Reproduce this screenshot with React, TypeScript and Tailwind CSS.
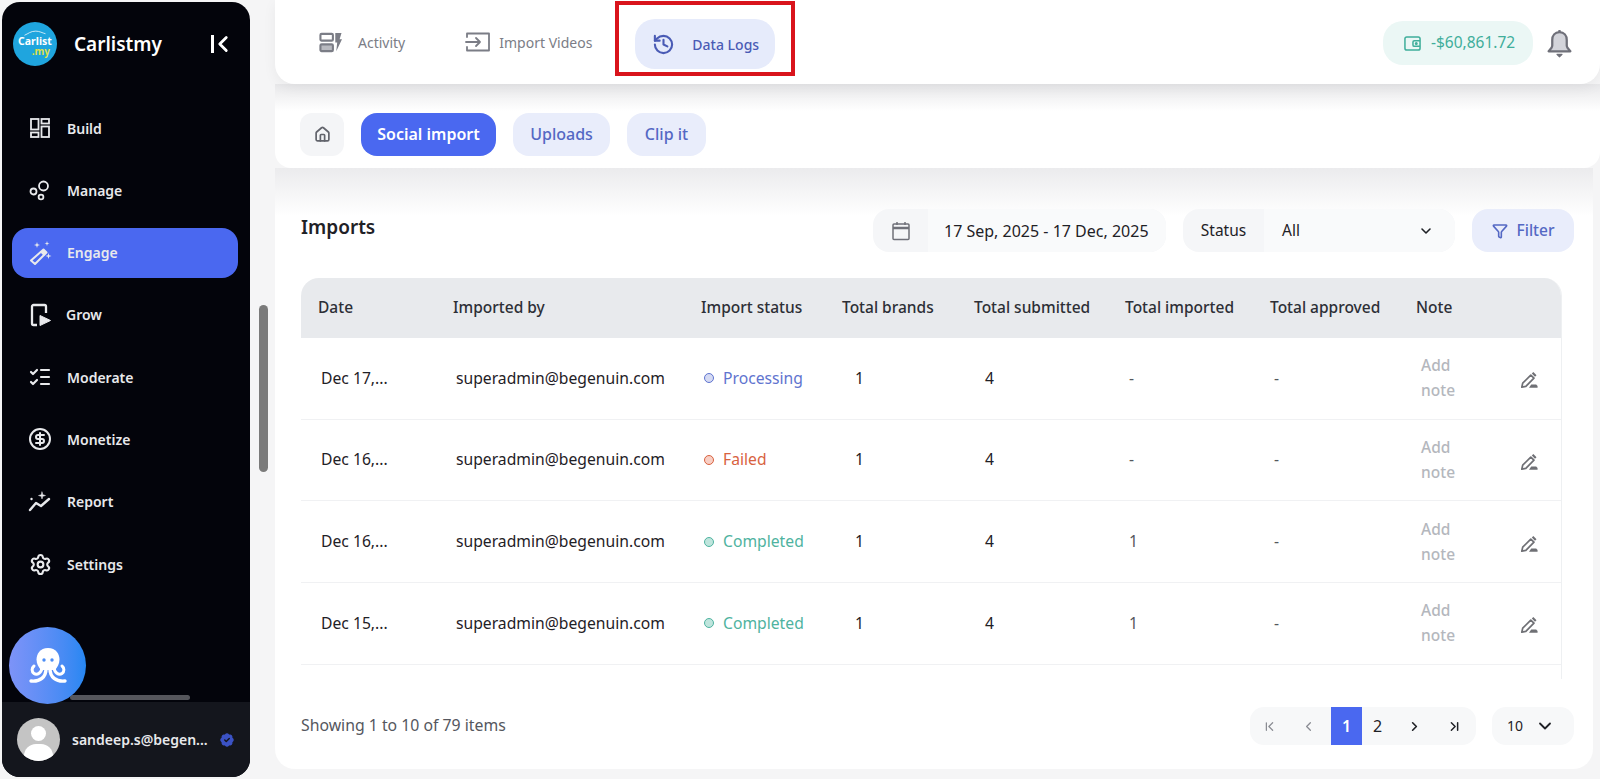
import {
  BadgeCheck,
  ChevronDown,
  ChevronFirst,
  ChevronLast,
  ChevronLeft,
  ChevronRight,
  CircleDollarSign,
  Funnel,
  History,
  House,
  ListChecks,
  Settings,
} from "lucide-react";
import type { ReactNode } from "react";

const rowGrid = "grid grid-cols-[135px_248px_141px_132px_151px_145px_146px_108px_54px]";

function BuildIcon() {
  return (
    <svg viewBox="0 0 20 20" className="h-[20px] w-[20px]" fill="none" stroke="currentColor" strokeWidth="1.800">
      <rect x="1" y="1" width="7.500" height="10.500" />
      <rect x="1" y="14.500" width="7.500" height="4.500" />
      <rect x="11.500" y="1" width="7.500" height="4.500" />
      <rect x="11.500" y="8.500" width="7.500" height="10.500" />
    </svg>
  );
}

function ManageIcon() {
  return (
    <svg viewBox="0 0 24 24" className="h-[24px] w-[24px]" fill="none" stroke="currentColor" strokeWidth="1.800">
      <circle cx="5.500" cy="13.500" r="3" />
      <circle cx="15.500" cy="8" r="4.500" />
      <circle cx="13" cy="19" r="2.400" />
    </svg>
  );
}

function WandIcon() {
  return (
    <svg viewBox="0 0 24 24" className="h-[24px] w-[24px]" fill="currentColor">
      <path d="M15.500 8.500l3 3L7 23l-4-3.500z" fill="none" stroke="currentColor" strokeWidth="2" strokeLinejoin="round" />
      <path d="M12.500 11.500l3.500 3.500 2.500-3.500-3-3z" />
      <path d="M9 1l.7 2.300L12 4l-2.300.7L9 7l-.7-2.300L6 4l2.300-.7z" />
      <path d="M19 0l.6 1.900 1.900.6-1.900.6L19 5l-.6-1.900-1.900-.6 1.900-.6z" />
      <path d="M20.500 12l.7 2.300 2.300.7-2.300.7-.7 2.300-.7-2.300-2.300-.7 2.300-.7z" />
    </svg>
  );
}

function GrowIcon() {
  return (
    <svg viewBox="0 0 24 24" className="h-[26px] w-[26px]" fill="none" stroke="currentColor" strokeWidth="2.300">
      <path d="M9 22H5.500A1.500 1.500 0 0 1 4 20.500v-17A1.500 1.500 0 0 1 5.500 2h11A1.500 1.500 0 0 1 18 3.500V10" />
      <path d="M12 12.500v10l10.500-5z" fill="currentColor" strokeWidth="1" strokeLinejoin="round" />
    </svg>
  );
}

function ReportIcon() {
  return (
    <svg viewBox="0 0 24 24" className="h-[24px] w-[24px]" fill="none" stroke="currentColor" strokeWidth="2.400" strokeLinecap="round" strokeLinejoin="round">
      <path d="M2 20l6-7 5 3 8-7" />
      <path d="M14 2l.8 2.700L17.500 5.500l-2.700.8L14 9l-.8-2.700-2.700-.8 2.700-.8z" fill="currentColor" strokeWidth="0.500" />
      <path d="M3.500 9h.01" />
    </svg>
  );
}

function OctopusIcon() {
  return (
    <svg viewBox="0 0 40 38" className="h-[38px] w-[40px]" fill="none">
      <path d="M20 1C12 1 8.500 7 8.500 12.500C8.500 17 10.500 20 13 23L27 23C29.500 20 31.500 17 31.500 12.500C31.500 7 28 1 20 1Z" fill="white" />
      <circle cx="16" cy="13" r="1.700" fill="#4b8df5" />
      <circle cx="24" cy="13" r="1.700" fill="#4b8df5" />
      <path d="M14 20C14 26 9 28.500 6 26.500C3.500 24.800 3.500 21 6 19" stroke="white" strokeWidth="3" strokeLinecap="round" />
      <path d="M26 20C26 26 31 28.500 34 26.500C36.500 24.800 36.500 21 34 19" stroke="white" strokeWidth="3" strokeLinecap="round" />
      <path d="M18 22C18 30 12 35 3 34" stroke="white" strokeWidth="3.400" strokeLinecap="round" />
      <path d="M22 22C22 30 28 35 37 34" stroke="white" strokeWidth="3.400" strokeLinecap="round" />
    </svg>
  );
}

function ActivityIcon() {
  return (
    <svg viewBox="0 0 24 24" className="h-[23px] w-[23px] text-[#7b7d86]" fill="none" stroke="currentColor" strokeWidth="2.200">
      <rect x="1.500" y="3" width="13" height="7" rx="1.200" />
      <rect x="1.500" y="14" width="13" height="7" rx="1.200" fill="#b9bac0" />
      <path d="M17 2h6.500l-2 6.500h2.500l-6 12.500 1-9h-2z" fill="currentColor" stroke="none" />
    </svg>
  );
}

function ImportIcon() {
  return (
    <svg viewBox="0 0 26 24" className="h-[24px] w-[26px] text-[#7b7d86]" fill="none" stroke="currentColor" strokeWidth="1.800" strokeLinecap="round" strokeLinejoin="round">
      <path d="M2 7V3.500h22v17H2V17" />
      <path d="M1 12h14M11 8l4 4-4 4" />
    </svg>
  );
}

function WalletIcon() {
  return (
    <svg viewBox="0 0 18 18" className="h-[17px] w-[17px] text-[#3fae9b]" fill="none" stroke="currentColor" strokeWidth="1.600">
      <rect x="1" y="2" width="16" height="14" rx="2" />
      <path d="M17 6h-6a1.500 1.500 0 0 0-1.500 1.500v3A1.500 1.500 0 0 0 11 12h6" />
      <circle cx="13" cy="9" r="0.800" fill="currentColor" />
    </svg>
  );
}

function BellIcon() {
  return (
    <svg viewBox="0 0 24 28" className="h-[29px] w-[25px]" fill="#d3d4da" stroke="#6f7079" strokeWidth="2.200" strokeLinejoin="round">
      <path d="M12 3c-4.500 0-7 3.500-7 7.500V16c0 1.500-1 3-3.500 5.500h21C20 19 19 17.500 19 16v-5.500C19 6.500 16.500 3 12 3z" />
      <path d="M12 1v2" />
      <path d="M9.500 24.500h5L12 27z" fill="#6f7079" strokeWidth="1" />
    </svg>
  );
}

function CalendarIcon() {
  return (
    <svg viewBox="0 0 18 20" className="h-[20px] w-[18px] text-[#6f7079]" fill="none" stroke="currentColor" strokeWidth="1.500">
      <rect x="1" y="3" width="16" height="15.500" rx="1" />
      <path d="M1 7h16" strokeWidth="2.500" />
      <path d="M5 1v3M13 1v3" />
    </svg>
  );
}

function EditIcon() {
  return (
    <svg viewBox="0 0 20 20" className="h-[18px] w-[18px] text-[#6f7075]" fill="none" stroke="currentColor" strokeWidth="1.900" strokeLinejoin="round">
      <path d="M2 18l1-4.500L12 4.500l3.500 3.500L6.500 17z" />
      <path d="M14 2l3.500 3.500" strokeWidth="2.400" />
      <path d="M10 18.500h9.500v-1.800L18 15h-5.500z" fill="currentColor" stroke="none" />
    </svg>
  );
}

function NavItem({ icon, label, active, tight }: { icon: ReactNode; label: string; active?: boolean; tight?: boolean }) {
  return (
    <div className={`flex h-[50px] items-center rounded-[16px] pl-[16px] text-[14px] font-semibold text-[#e8e9ec] ${active ? "bg-[#4a68f0]" : ""}`}>
      <span className="flex w-[24px] justify-center text-[#e8e9ec]">{icon}</span>
      <span className={tight ? "ml-[14px]" : "ml-[15px]"}>{label}</span>
    </div>
  );
}

function Sidebar() {
  return (
    <aside className="relative ml-[2px] mt-[2px] flex h-[775px] w-[248px] shrink-0 flex-col overflow-hidden rounded-[18px] bg-[#03040b]">
      <div className="flex h-[84px] items-center pl-[11px] pr-[14px]">
        <div className="relative flex h-[44px] w-[44px] flex-col items-center justify-center rounded-full bg-[#1fa5de] pt-[4px] leading-[10px]">
          <svg viewBox="0 0 30 8" className="absolute left-[7px] top-[8px] h-[6px] w-[30px]" fill="none" stroke="white" strokeWidth="1">
            <path d="M1 7C6 5 9 1.500 16 1.500C21 1.500 25 4 29 5" />
          </svg>
          <span className="text-[10.500px] font-bold text-white">Carlist</span>
          <span className="self-end pr-[7px] text-[10px] font-bold text-[#dfe04a]">.my</span>
        </div>
        <span className="ml-[17px] text-[19px] font-semibold text-white">Carlistmy</span>
        <span className="ml-auto flex items-center">
          <span className="h-[18px] w-[3px] bg-white" />
          <ChevronLeft size={26} strokeWidth={2.600} className="-ml-[4px] text-white" />
        </span>
      </div>
      <nav className="ml-[10px] mr-[12px] mt-[17px] flex flex-col gap-[12.300px]">
        <NavItem icon={<BuildIcon />} label="Build" />
        <NavItem icon={<ManageIcon />} label="Manage" />
        <NavItem icon={<WandIcon />} label="Engage" active />
        <NavItem icon={<GrowIcon />} label="Grow" tight />
        <NavItem icon={<ListChecks size={24} strokeWidth={2.200} />} label="Moderate" />
        <NavItem icon={<CircleDollarSign size={24} />} label="Monetize" />
        <NavItem icon={<ReportIcon />} label="Report" />
        <NavItem icon={<Settings size={23} strokeWidth={2.200} />} label="Settings" />
      </nav>
      <div className="mt-auto">
        <div className="ml-[68px] mb-[2px] h-[5px] w-[120px] rounded-full bg-[#55565c]" />
        <div className="flex h-[75px] items-center bg-[#14161d] pl-[15px] pr-[14px]">
          <div className="relative h-[43px] w-[43px] shrink-0 overflow-hidden rounded-full bg-[#c4c4c4]">
            <div className="absolute left-[14px] top-[8px] h-[15px] w-[15px] rounded-full bg-white" />
            <div className="absolute left-[7px] top-[26px] h-[24px] w-[29px] rounded-full bg-white" />
          </div>
          <span className="ml-[12px] text-[14px] font-semibold whitespace-nowrap text-[#e8e9ec]">sandeep.s@begen...</span>
          <BadgeCheck size={18} className="ml-auto shrink-0 text-[#14161d]" fill="#3b52c4" />
        </div>
      </div>
      <div className="absolute left-[7px] top-[625px] flex h-[77px] w-[77px] items-center justify-center rounded-full bg-gradient-to-r from-[#7d93f8] to-[#2587f2] pt-[1px]">
        <OctopusIcon />
      </div>
    </aside>
  );
}

function TopBar() {
  return (
    <header className="relative z-20 flex h-[84px] items-center rounded-b-[20px] bg-white pl-[44px] pr-[28px] shadow-[0_4px_14px_rgba(0,0,0,0.05)]">
      <ActivityIcon />
      <span className="ml-[16px] text-[14px] text-[#7b7d86]">Activity</span>
      <span className="ml-[60px] flex items-center">
        <ImportIcon />
      </span>
      <span className="ml-[8px] text-[14px] text-[#7b7d86]">Import Videos</span>
      <div className="ml-[23px] mt-[1px] flex h-[75px] w-[180px] items-end justify-center self-start border-[4px] border-[#d9141c] pb-[3px]">
        <div className="flex h-[50px] w-[140px] items-center rounded-[20px] bg-[#e6ebfb] pl-[17px] text-[14px] font-medium text-[#4a5bb5]">
          <History size={23} strokeWidth={2.200} />
          <span className="ml-[17px]">Data Logs</span>
        </div>
      </div>
      <div className="ml-auto mt-[2px] flex h-[44px] w-[150px] items-center rounded-[20px] bg-[#ebf7f5] pl-[21px] text-[15.500px] text-[#3fae9b]">
        <WalletIcon />
        <span className="ml-[10px]">-$60,861.72</span>
      </div>
      <span className="ml-[14px] mt-[2px] flex items-center">
        <BellIcon />
      </span>
    </header>
  );
}

function SubTabs() {
  return (
    <div className="relative z-10 flex h-[84px] items-center gap-[17px] rounded-b-[16px] bg-gradient-to-b from-[#e8e8ea] to-white to-[32%] pl-[25px] pt-[16px]">
      <div className="flex h-[43px] w-[44px] items-center justify-center rounded-[12px] bg-[#f4f5f7] text-[#62646c]">
        <House size={17} strokeWidth={2.400} />
      </div>
      <div className="flex h-[43px] w-[135px] items-center justify-center rounded-[16px] bg-[#4a68f0] text-[16px] font-semibold text-white">Social import</div>
      <div className="flex h-[43px] w-[97px] items-center justify-center rounded-[16px] bg-[#e9edfb] text-[16px] font-medium text-[#5468c4]">Uploads</div>
      <div className="flex h-[43px] w-[79px] items-center justify-center rounded-[16px] bg-[#e9edfb] text-[16px] font-medium text-[#5468c4]">Clip it</div>
    </div>
  );
}

function FilterRow() {
  return (
    <div className="flex items-center pl-[26px] pr-[19px] pt-[41px]">
      <h2 className="mt-[-6px] text-[19px] font-semibold text-[#1f2126]">Imports</h2>
      <div className="ml-auto flex h-[43px] w-[293px] items-stretch overflow-hidden rounded-[16px] bg-[#f5f6f8]">
        <span className="flex w-[55px] items-center justify-center"><CalendarIcon /></span>
        <span className="flex flex-1 items-center rounded-r-[16px] bg-[#f9fafb] pl-[16px] text-[16px] whitespace-nowrap text-[#1f2126]">17 Sep, 2025 - 17 Dec, 2025</span>
      </div>
      <div className="ml-[17px] flex h-[43px] w-[272px] items-stretch overflow-hidden rounded-[16px] bg-[#f5f6f8]">
        <span className="flex w-[81px] items-center justify-center text-[15.500px] text-[#1f2126]">Status</span>
        <span className="flex flex-1 items-center justify-between rounded-r-[16px] bg-[#f9fafb] pl-[18px] pr-[21px] text-[15.500px] text-[#1f2126]">
          All
          <ChevronDown size={16} strokeWidth={2.400} />
        </span>
      </div>
      <div className="ml-[17px] flex h-[43px] w-[102px] items-center justify-center gap-[9px] rounded-[16px] bg-[#e9edfb] text-[15.500px] font-medium text-[#5468c4]">
        <Funnel size={16} strokeWidth={2.400} />
        Filter
      </div>
    </div>
  );
}

const rows = [
  { date: "Dec 17,...", status: "Processing", imported: "-", text: "text-[#5f74cf]", dot: "bg-[#d5daf3] border-[#5f74cf]" },
  { date: "Dec 16,...", status: "Failed", imported: "-", text: "text-[#d8623f]", dot: "bg-[#f8cfc5] border-[#d8623f]" },
  { date: "Dec 16,...", status: "Completed", imported: "1", text: "text-[#4fb3a0]", dot: "bg-[#bfe5dd] border-[#4fb3a0]" },
  { date: "Dec 15,...", status: "Completed", imported: "1", text: "text-[#4fb3a0]", dot: "bg-[#bfe5dd] border-[#4fb3a0]" },
];

function ImportsTable() {
  const heads = ["Date", "Imported by", "Import status", "Total brands", "Total submitted", "Total imported", "Total approved", "Note"];
  return (
    <div className="ml-[26px] mr-[31px] mt-[26px] h-[401px] overflow-hidden rounded-t-[18px] border-r border-[#eef0f2]">
      <div className={`${rowGrid} h-[60px] items-center bg-[#e8eaed] text-[15.500px] font-medium text-[#2d2f36]`}>
        {heads.map((h) => (
          <span key={h} className="pl-[17px] whitespace-nowrap">{h}</span>
        ))}
      </div>
      {rows.map((r, i) => (
        <div key={i} className={`${rowGrid} h-[81.700px] items-center border-b border-[#f0f1f3] text-[15.700px] text-[#1f2126]`}>
          <span className="pl-[20px]">{r.date}</span>
          <span className="pl-[20px] whitespace-nowrap">superadmin@begenuin.com</span>
          <span className={`flex items-center pl-[20px] ${r.text}`}>
            <span className={`mr-[9px] h-[10px] w-[10px] rounded-full border ${r.dot}`} />
            {r.status}
          </span>
          <span className="pl-[30px]">1</span>
          <span className="pl-[28px]">4</span>
          <span className="pl-[21px] text-[#55575e]">{r.imported}</span>
          <span className="pl-[21px] text-[#55575e]">-</span>
          <span className="w-[70px] pl-[22px] text-[15.500px] font-medium leading-[25px] text-[#b4b7bd]">Add note</span>
          <span className="flex justify-start pl-[13px] pt-[4px]"><EditIcon /></span>
        </div>
      ))}
    </div>
  );
}

function Pager() {
  return (
    <div className="flex items-center pl-[26px] pr-[19px] pt-[28px]">
      <span className="text-[15.800px] text-[#55575e]">Showing 1 to 10 of 79 items</span>
      <div className="ml-auto flex h-[38px] w-[226px] items-center rounded-[14px] bg-[#f7f8f9] pl-[12px] text-[#1f2126]">
        <ChevronFirst size={15} className="text-[#8a8c93]" />
        <ChevronLeft size={15} className="ml-[24px] text-[#8a8c93]" />
        <span className="ml-[15px] flex h-[38px] w-[31px] items-center justify-center bg-[#4a68f0] text-[16px] font-semibold text-white">1</span>
        <span className="flex h-[38px] w-[31px] items-center justify-center text-[16px]">2</span>
        <ChevronRight size={15} strokeWidth={2.600} className="ml-[14px]" />
        <ChevronLast size={15} strokeWidth={2.400} className="ml-[25px]" />
      </div>
      <div className="ml-[16px] flex h-[38px] w-[82px] items-center justify-between rounded-[14px] bg-[#f7f8f9] pl-[15px] pr-[19px] text-[14px] leading-none text-[#1f2126]">
        10
        <ChevronDown size={20} strokeWidth={2.200} />
      </div>
    </div>
  );
}

export default function App() {
  return (
    <div className="flex h-[779px] w-[1600px] overflow-hidden bg-[#f5f5f6] font-['Noto_Sans',sans-serif]">
      <Sidebar />
      <div className="w-[25px] shrink-0">
        <div className="ml-[9px] mt-[305px] h-[167px] w-[9px] rounded-full bg-[#7b7b7b]" />
      </div>
      <main className="flex min-w-0 flex-1 flex-col">
        <TopBar />
        <SubTabs />
        <section className="mr-[7px] h-[601px] rounded-b-[20px] bg-gradient-to-b from-[#ebebed] to-white to-[8%]">
          <FilterRow />
          <ImportsTable />
          <Pager />
        </section>
      </main>
    </div>
  );
}
